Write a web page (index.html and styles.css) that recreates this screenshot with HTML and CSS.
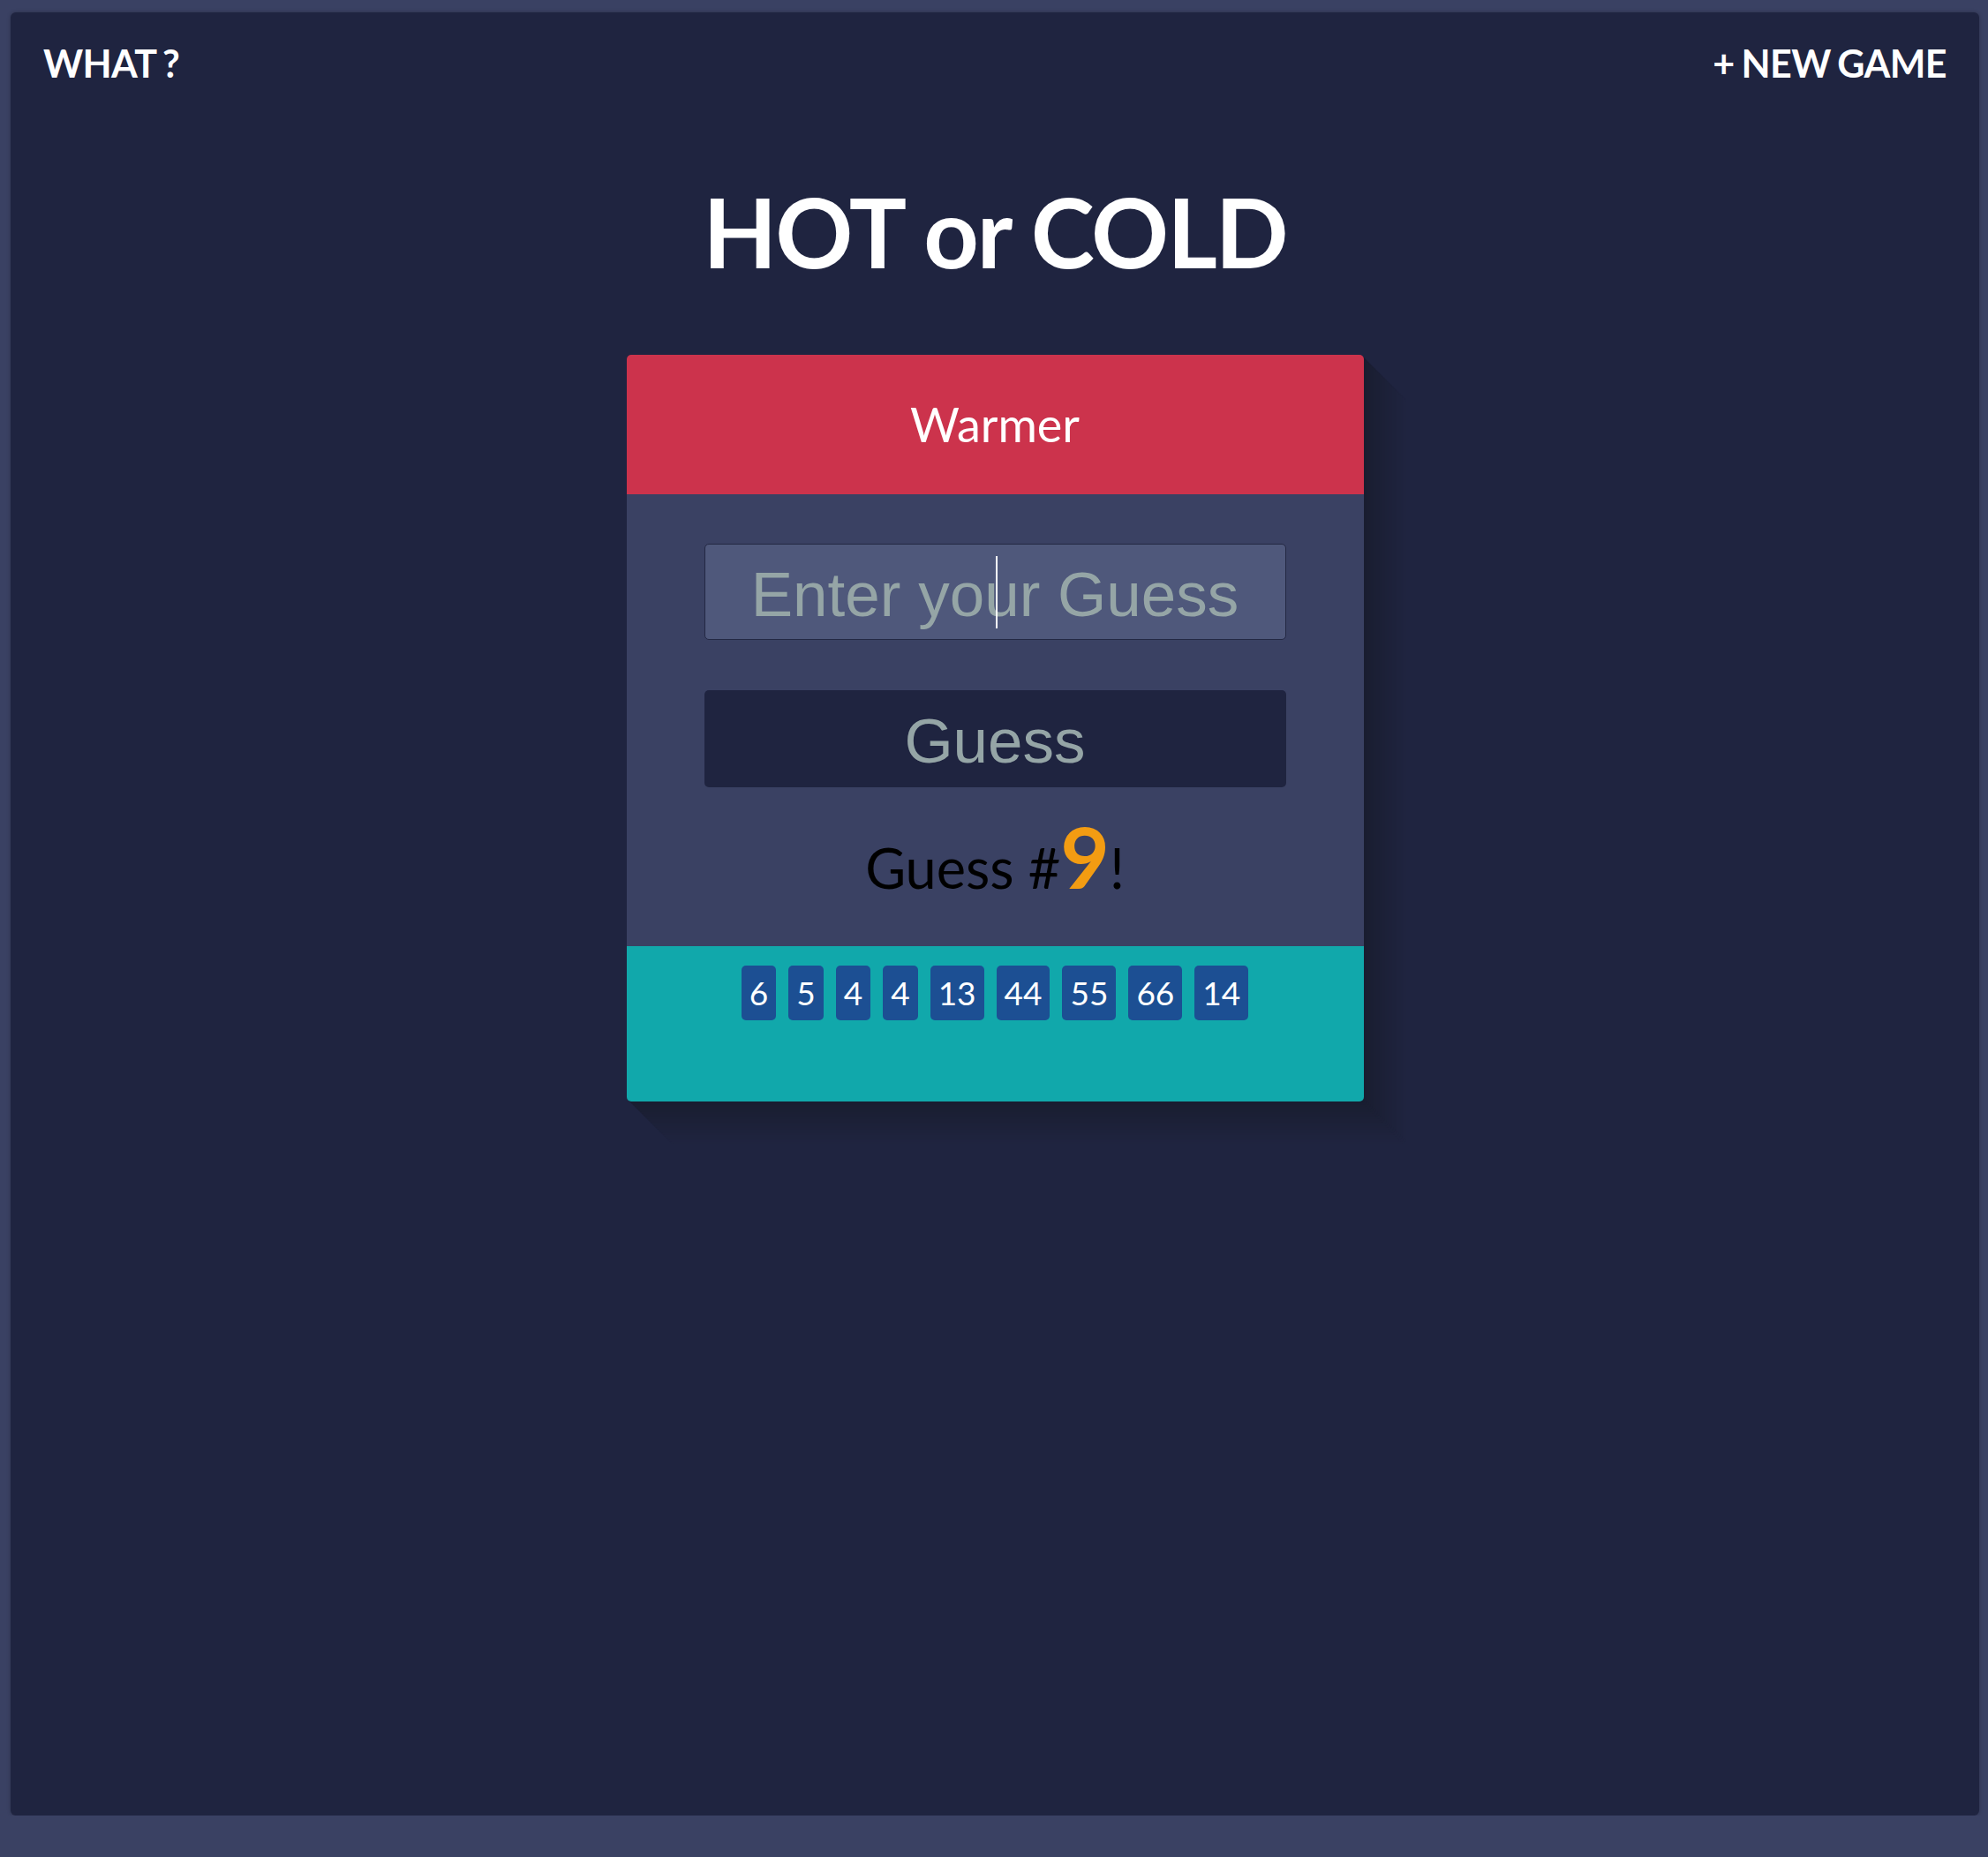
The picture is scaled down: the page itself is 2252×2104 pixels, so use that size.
FILE: index.html
```html
<!DOCTYPE html>
<html lang="en">
<head>
<meta charset="utf-8">
<title>Hot or Cold</title>
<link rel="stylesheet" href="styles.css">
</head>
<body>
<div class="panel">
  <header class="topbar">
    <a class="nav-link" href="#">WHAT ?</a>
    <a class="nav-link" href="#">+ NEW GAME</a>
  </header>
  <h1 class="title">HOT or COLD</h1>
  <section class="game">
    <div class="feedback">Warmer</div>
    <form class="guess-form">
      <div class="field">
        <input class="guess-input" type="text" placeholder="Enter your Guess">
        <span class="caret"></span>
      </div>
      <button class="guess-button" type="button">Guess</button>
      <p class="count">Guess #<span class="count-num">9</span>!</p>
    </form>
    <ul class="history">
      <li class="badge">6</li>
      <li class="badge">5</li>
      <li class="badge">4</li>
      <li class="badge">4</li>
      <li class="badge">13</li>
      <li class="badge">44</li>
      <li class="badge">55</li>
      <li class="badge">66</li>
      <li class="badge">14</li>
    </ul>
  </section>
</div>
</body>
</html>
```
FILE: styles.css
```css
html {
  background: #3a4163;
}
body {
  margin: 0;
  padding: 14px 10px 0 12px;
  font-family: Lato, "Open Sans", sans-serif;
}
.panel {
  height: 2043px;
  background: #1f2440;
  border-radius: 6px;
  box-shadow: 0 0 4px rgba(0, 0, 0, 0.25);
}
.topbar {
  display: flex;
  justify-content: space-between;
  padding: 32px 37px 0;
}
.nav-link {
  color: #fff;
  text-decoration: none;
  letter-spacing: -0.6px;
  word-spacing: -2px;
  font: 700 43px/1.2 Lato, sans-serif;
}
.title {
  margin: 99px 0 0;
  text-align: center;
  color: #fff;
  letter-spacing: -2px;
  font: 700 109px/1.2 Lato, sans-serif;
}
.game {
  width: 835px;
  margin: 75px auto 0;
  border-radius: 5px;
  overflow: hidden;
  box-shadow:
    2px 2px 0 rgb(25,29,48), 4px 4px 0 rgb(25,29,49), 6px 6px 0 rgb(26,30,49),
    8px 8px 0 rgb(26,30,50), 10px 10px 0 rgb(26,30,51), 12px 12px 0 rgb(26,31,51),
    14px 14px 0 rgb(27,31,52), 16px 16px 0 rgb(27,31,53), 18px 18px 0 rgb(27,31,53),
    20px 20px 0 rgb(27,32,54), 22px 22px 0 rgb(28,32,55), 24px 24px 0 rgb(28,32,55),
    26px 26px 0 rgb(28,33,56), 28px 28px 0 rgb(28,33,57), 30px 30px 0 rgb(29,33,57),
    32px 32px 0 rgb(29,33,58), 34px 34px 0 rgb(29,34,59), 36px 36px 0 rgb(29,34,59),
    38px 38px 0 rgb(30,34,60), 40px 40px 0 rgb(30,35,61), 42px 42px 0 rgb(30,35,61),
    44px 44px 0 rgb(30,35,62), 46px 46px 0 rgb(31,35,63), 48px 48px 0 rgb(31,36,63);
}
.feedback {
  height: 158px;
  display: flex;
  align-items: center;
  justify-content: center;
  background: #cc334c;
  color: #fff;
  font: 400 54px/1.2 Lato, sans-serif;
}
.guess-form {
  margin: 0;
  padding: 56px 88px 45px;
  background: #3a4163;
}
.field {
  position: relative;
}
.guess-input {
  display: block;
  width: 100%;
  height: 109px;
  box-sizing: border-box;
  margin: 0;
  padding: 5px 0 0;
  background: #4f587b;
  border: 1px solid #232843;
  border-radius: 5px;
  outline: none;
  text-align: center;
  color: #95a5a6;
  font: 400 71px "Liberation Sans", Arial, sans-serif;
}
.guess-input::placeholder {
  color: #95a5a6;
  opacity: 1;
}
.caret {
  position: absolute;
  left: calc(50% + 1px);
  top: 14px;
  width: 2px;
  height: 82px;
  background: #fff;
}
.guess-button {
  display: block;
  width: 100%;
  height: 110px;
  margin-top: 57px;
  padding: 5px 0 0;
  background: #1f2440;
  border: 0;
  border-radius: 5px;
  color: #95a5a6;
  font: 400 71px "Liberation Sans", Arial, sans-serif;
}
.count {
  margin: 20px 0 0;
  text-align: center;
  color: #000;
  font: 400 63px Lato, sans-serif;
}
.count-num {
  font-weight: 700;
  font-size: 96px;
  color: #f39c12;
}
.history {
  display: flex;
  justify-content: center;
  gap: 14px;
  height: 176px;
  box-sizing: border-box;
  margin: 0;
  padding: 22px 0 0;
  list-style: none;
  background: #11a8ab;
}
.badge {
  height: 62px;
  padding: 0 9px;
  background: #1c4f93;
  border-radius: 5px;
  color: #fff;
  font: 400 37px/62px Lato, sans-serif;
}
```
